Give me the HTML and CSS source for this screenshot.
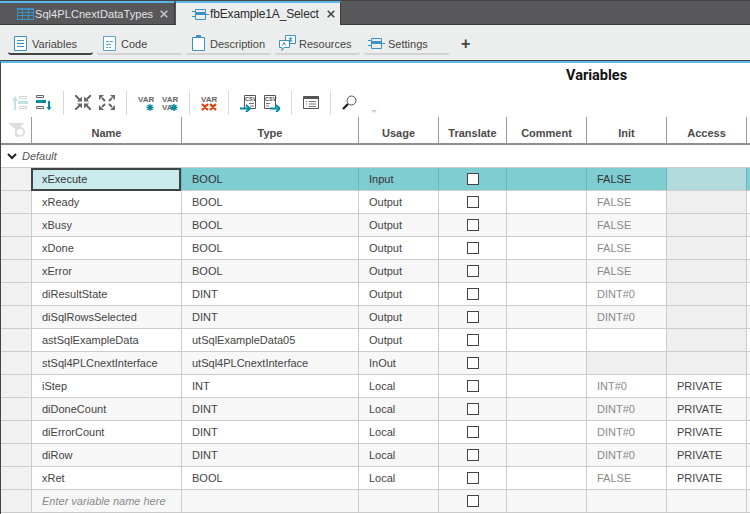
FILE: index.html
```html
<!DOCTYPE html>
<html lang="en">
<head>
    <meta charset="UTF-8">
    <title>fbExample1A_Select</title>
    <link rel="stylesheet" href="styles.css">
</head>
<body>
    <div class="window">
        <div class="tabbar">
            <div class="tab">
                <svg class="tab-icon" width="17" height="12" viewBox="0 0 17 12"><path d="M0 0h17v12H0z" fill="#3f90c4"/><path d="M1 2h4v2H1zM6 2h5v2H6zM12 2h4v2h-4zM1 5h4v2H1zM6 5h5v2H6zM12 5h4v2h-4zM1 8h4v3H1zM6 8h5v3H6zM12 8h4v3h-4z" fill="#58585a"/></svg>
                <span class="tab-name tab-name-small">Sql4PLCnextDataTypes</span>
                <svg class="tab-close" width="8" height="8" viewBox="0 0 8 8"><path d="M.7.700l6.600 6.600M7.300.700L.7 7.300" stroke="#c4c4c4" stroke-width="1.600"/></svg>
            </div>
            <div class="tab tab-active">
                <svg class="tab-icon" width="17" height="11" viewBox="0 0 17 11"><path d="M3.500.5h10v10h-10z" fill="none" stroke="#3f90c4"/><path d="M3 3h11v3H3z" fill="#3f90c4"/><path d="M0 2.500h3M0 7.500h3M14 5.500h3" stroke="#3f90c4"/></svg>
                <span class="tab-name">fbExample1A_Select</span>
                <svg class="tab-close" width="8" height="8" viewBox="0 0 8 8"><path d="M.7.700l6.600 6.600M7.300.700L.7 7.300" stroke="#444" stroke-width="1.600"/></svg>
            </div>
        </div>

        <div class="subtabs">
            <div class="subtab subtab-active">
                <svg width="13" height="15" viewBox="0 0 13 15"><path d="M.5.500h12v14H.5z" fill="#fff" stroke="#3f90c4"/><path d="M3 4.500h7M3 7.500h7M3 10.500h7" stroke="#3f90c4"/></svg>
                <span>Variables</span>
            </div>
            <div class="subtab">
                <svg width="13" height="15" viewBox="0 0 13 15"><path d="M.5.500h12v14H.5z" fill="#fff" stroke="#5aa4d0"/><path d="M3 5.500h3M7 5.500h3M3 8.500h5M3 11.500h2M6 11.500h2" stroke="#5aa4d0"/></svg>
                <span>Code</span>
            </div>
            <div class="subtab">
                <svg width="13" height="16" viewBox="0 0 13 16"><path d="M.5 2.500h12v13H.5z" fill="#fff" stroke="#3f90c4"/><path d="M4 0h5v3H4z" fill="#3f90c4"/></svg>
                <span>Description</span>
            </div>
            <div class="subtab">
                <svg width="17" height="16" viewBox="0 0 17 16"><path d="M6.500.500h10v8h-10z" fill="#fff" stroke="#3f90c4"/><path d="M.5 5.500h10v7H5l-2 3v-3H.5z" fill="#fff" stroke="#3f90c4"/><path d="M11.500 2v5M9.500 3l4 3M13.500 3l-4 3M3.500 10.500l1.500-3 1.500 3" fill="none" stroke="#3f90c4"/></svg>
                <span>Resources</span>
            </div>
            <div class="subtab subtab-last">
                <svg width="17" height="11" viewBox="0 0 17 11"><path d="M3.500.5h10v10h-10z" fill="none" stroke="#3f90c4"/><path d="M3 3h11v3H3z" fill="#3f90c4"/><path d="M0 2.500h3M0 7.500h3M14 5.500h3" stroke="#3f90c4"/></svg>
                <span>Settings</span>
            </div>
            <span class="add-tab">+</span>
        </div>

        <div class="content">
            <h2 class="title">Variables</h2>
            <div class="toolbar">
                <svg class="tool" width="16" height="15" viewBox="0 0 16 15"><path d="M3 15V4" stroke="#bfe3e6" stroke-width="2"/><path d="M0 6l3-5 3 5z" fill="#bfe3e6"/><path d="M7.500 1.500h7v2h-7zM7.500 11.500h7v2h-7z" fill="#fff" stroke="#d5d5d5"/><path d="M6 6h10v3H6z" fill="#bfe3e6"/></svg>
                <svg class="tool" width="16" height="16" viewBox="0 0 16 16"><path d="M.5.500h7v2h-7zM.5 11.500h7v2h-7z" fill="none" stroke="#666"/><path d="M0 5h10v3H0z" fill="#008c9e"/><path d="M13 6v7" stroke="#008c9e" stroke-width="2"/><path d="M10.500 12h5L13 15.500z" fill="#008c9e"/></svg>
                <i class="sep"></i>
                <svg class="tool" width="16" height="15" viewBox="0 0 16 15"><path d="M0 0l5 5M16 0l-5 5M0 15l5-5M16 15l-5-5" stroke="#666" stroke-width="2"/><path d="M7 6.500H2l5-5zM9 6.500h5l-5-5zM7 8.500H2l5 5zM9 8.500h5l-5 5z" fill="#666"/></svg>
                <svg class="tool" width="16" height="15" viewBox="0 0 16 15"><path d="M3 3l3 3M13 3l-3 3M3 12l3-3M13 12l-3-3" stroke="#666" stroke-width="2"/><path d="M0 0h5L0 5zM16 0h-5l5 5zM0 15h5l-5-5zM16 15h-5l5-5z" fill="#666"/></svg>
                <i class="sep"></i>
                <svg class="tool" width="16" height="18" viewBox="0 0 16 18"><text x="0" y="8" class="var-text">VAR</text><path d="M12 10v7M8.500 13.500h7M9.500 11l5 5M14.500 11l-5 5" stroke="#008c9e" stroke-width="1.300"/></svg>
                <svg class="tool" width="16" height="18" viewBox="0 0 16 18"><text x="0" y="8" class="var-text">VAR</text><text x="0" y="16" class="var-text">VA</text><path d="M12 10v7M8.500 13.500h7M9.500 11l5 5M14.500 11l-5 5" stroke="#008c9e" stroke-width="1.500"/></svg>
                <i class="sep"></i>
                <svg class="tool" width="16" height="18" viewBox="0 0 16 18"><text x="0" y="8" class="var-text">VAR</text><path d="M1 10l6 6M7 10l-6 6M9 10l6 6M15 10l-6 6" stroke="#e8400c" stroke-width="2.200"/></svg>
                <i class="sep"></i>
                <svg class="tool" width="16" height="18" viewBox="0 0 16 18"><path d="M4.500 1.500h11v13h-11z" fill="#fff" stroke="#555"/><text x="5" y="7" class="csv-text">CSV</text><path d="M9 9.500h5M10 12h4" stroke="#777"/><path d="M0 14.500h9" stroke="#008c9e" stroke-width="2"/><path d="M6 11l4 3.500-4 3.500" fill="none" stroke="#008c9e" stroke-width="2"/></svg>
                <svg class="tool" width="16" height="18" viewBox="0 0 16 18"><path d="M.5 1.500h11v13H.5z" fill="#fff" stroke="#555"/><text x="1" y="7" class="csv-text">CSV</text><path d="M2 9.500h4M2 12h3" stroke="#777"/><path d="M6 14.500h9" stroke="#008c9e" stroke-width="2"/><path d="M12 11l4 3.500-4 3.500" fill="none" stroke="#008c9e" stroke-width="2"/></svg>
                <i class="sep"></i>
                <svg class="tool" width="16" height="13" viewBox="0 0 16 13"><path d="M.5.500h15v12H.5z" fill="#fff" stroke="#555"/><path d="M1 2h14" stroke="#555" stroke-width="2"/><path d="M3 5.500h1M3 8h1M6 5.500h7M6 8h7M6 10.500h7" stroke="#777"/></svg>
                <i class="sep"></i>
                <svg class="tool" width="15" height="15" viewBox="0 0 15 15"><circle cx="9.500" cy="5.500" r="4.500" fill="#fff" stroke="#555"/><path d="M6 9l-5 5" stroke="#222" stroke-width="2.400"/></svg>
                <span class="tool-more"></span>
            </div>

            <table class="grid">
                <colgroup>
                    <col class="c-handle"><col class="c-name"><col class="c-type"><col class="c-usage"><col class="c-translate"><col class="c-comment"><col class="c-init"><col class="c-access"><col class="c-rest">
                </colgroup>
                <thead>
                    <tr>
                        <th class="filter"><svg width="18" height="15" viewBox="0 0 18 15"><path d="M0 0h16l-6 6v9l-3-2V6z" fill="#dedede"/><circle cx="12" cy="9" r="4" fill="#fff" stroke="#dedede" stroke-width="2"/></svg></th>
                        <th>Name</th><th>Type</th><th>Usage</th><th>Translate</th><th>Comment</th><th>Init</th><th>Access</th><th></th>
                    </tr>
                </thead>
                <tbody>
                    <tr class="group"><td colspan="9"><svg width="10" height="7" viewBox="0 0 10 7"><path d="M1 1l4 4 4-4" fill="none" stroke="#222" stroke-width="2"/></svg><em>Default</em></td></tr>
                    <tr class="selected"><td class="handle"></td><td class="focus">xExecute</td><td>BOOL</td><td>Input</td><td class="check"><i></i></td><td></td><td>FALSE</td><td class="locked"></td><td></td></tr>
                    <tr><td class="handle"></td><td>xReady</td><td>BOOL</td><td>Output</td><td class="check"><i></i></td><td></td><td class="dim">FALSE</td><td class="locked"></td><td></td></tr>
                    <tr><td class="handle"></td><td>xBusy</td><td>BOOL</td><td>Output</td><td class="check"><i></i></td><td></td><td class="dim">FALSE</td><td class="locked"></td><td></td></tr>
                    <tr><td class="handle"></td><td>xDone</td><td>BOOL</td><td>Output</td><td class="check"><i></i></td><td></td><td class="dim">FALSE</td><td class="locked"></td><td></td></tr>
                    <tr><td class="handle"></td><td>xError</td><td>BOOL</td><td>Output</td><td class="check"><i></i></td><td></td><td class="dim">FALSE</td><td class="locked"></td><td></td></tr>
                    <tr><td class="handle"></td><td>diResultState</td><td>DINT</td><td>Output</td><td class="check"><i></i></td><td></td><td class="dim">DINT#0</td><td class="locked"></td><td></td></tr>
                    <tr><td class="handle"></td><td>diSqlRowsSelected</td><td>DINT</td><td>Output</td><td class="check"><i></i></td><td></td><td class="dim">DINT#0</td><td class="locked"></td><td></td></tr>
                    <tr><td class="handle"></td><td>astSqlExampleData</td><td>utSqlExampleData05</td><td>Output</td><td class="check"><i></i></td><td></td><td class="dim"></td><td class="locked"></td><td></td></tr>
                    <tr><td class="handle"></td><td>stSql4PLCnextInterface</td><td>utSql4PLCnextInterface</td><td>InOut</td><td class="check"><i></i></td><td></td><td class="locked"></td><td class="locked"></td><td></td></tr>
                    <tr><td class="handle"></td><td>iStep</td><td>INT</td><td>Local</td><td class="check"><i></i></td><td></td><td class="dim">INT#0</td><td>PRIVATE</td><td></td></tr>
                    <tr><td class="handle"></td><td>diDoneCount</td><td>DINT</td><td>Local</td><td class="check"><i></i></td><td></td><td class="dim">DINT#0</td><td>PRIVATE</td><td></td></tr>
                    <tr><td class="handle"></td><td>diErrorCount</td><td>DINT</td><td>Local</td><td class="check"><i></i></td><td></td><td class="dim">DINT#0</td><td>PRIVATE</td><td></td></tr>
                    <tr><td class="handle"></td><td>diRow</td><td>DINT</td><td>Local</td><td class="check"><i></i></td><td></td><td class="dim">DINT#0</td><td>PRIVATE</td><td></td></tr>
                    <tr><td class="handle"></td><td>xRet</td><td>BOOL</td><td>Local</td><td class="check"><i></i></td><td></td><td class="dim">FALSE</td><td>PRIVATE</td><td></td></tr>
                    <tr><td class="handle"></td><td class="placeholder">Enter variable name here</td><td></td><td></td><td class="check"><i></i></td><td></td><td></td><td></td><td></td></tr>
                </tbody>
            </table>
        </div>
    </div>
</body>
</html>
```

FILE: styles.css
```css
/* Base */
* {
    box-sizing: border-box;
    margin: 0;
    padding: 0;
}

html, body {
    width: 750px;
    height: 514px;
    overflow: hidden;
}

body {
    font-family: 'Liberation Sans', Arial, sans-serif;
    font-size: 11px;
    color: #333;
    background: #fff;
}

.window {
    display: flex;
    flex-direction: column;
    height: 514px;
}

/* Document tabs */
.tabbar {
    display: flex;
    align-items: flex-start;
    height: 25px;
    background: #58585a;
    border-top: 1px solid #444;
    border-bottom: 1px solid #3a3a3a;
    flex-shrink: 0;
}

.tab {
    display: flex;
    align-items: center;
    width: 175px;
    height: 23px;
    padding-left: 17px;
    border-top: 2px solid #5bb8e8;
    border-right: 1px solid #3a3a3a;
    color: #e4e4e4;
    font-size: 12px;
}

.tab-active {
    width: 165px;
    margin-left: 1px;
    height: 24px;
    padding-left: 16px;
    background: #eceeed;
    color: #2b2b2b;
}

.tab-icon {
    margin-right: 1px;
    flex-shrink: 0;
}

.tab-name {
    width: 109px;
    white-space: nowrap;
    letter-spacing: -0.15px;
}

.tab-name-small {
    width: 117px;
    font-size: 11px;
    letter-spacing: 0.07px;
}

.tab-close {
    flex-shrink: 0;
    margin-left: 8px;
}

/* View tabs */
.subtabs {
    display: flex;
    align-items: flex-start;
    height: 36px;
    padding: 10px 0 0 8px;
    background: #eceeed;
    border-bottom: 1px solid #444;
    flex-shrink: 0;
}

.subtab {
    display: grid;
    grid-template-columns: 24px 1fr;
    align-items: center;
    justify-items: center;
    width: 85px;
    height: 20px;
    margin-right: 4px;
    border-bottom: 2px solid #d2d2d2;
    border-radius: 0 0 3px 3px;
    color: #444;
    font-size: 11px;
}

.subtab span {
    justify-self: start;
}

.subtab svg {
    margin-bottom: 2px;
}

.subtab-active {
    border-bottom-color: #444;
}

.subtab-last {
    width: 86px;
}

.add-tab {
    margin-left: 7px;
    font-size: 16px;
    font-weight: bold;
    line-height: 18px;
    color: #444;
}

/* Main area */
.content {
    flex: 1;
    border-top: 2px solid #5bb8e8;
    border-left: 1px solid #444;
    overflow: hidden;
}

.title {
    height: 25px;
    padding-top: 4px;
    padding-left: 565px;
    font-family: Roboto, sans-serif;
    font-size: 14.5px;
    line-height: 17px;
    font-weight: bold;
    color: #111;
}

.toolbar {
    display: flex;
    align-items: center;
    height: 29px;
    padding-left: 11px;
}

.tool {
    margin-right: 8px;
    flex-shrink: 0;
}

.var-text {
    font: bold 8px 'Liberation Sans', sans-serif;
    fill: #666;
}

.csv-text {
    font: bold 5.500px 'Liberation Sans', sans-serif;
    fill: #444;
}

.sep {
    width: 1px;
    height: 24px;
    margin: 0 11px 0 3px;
    background: #d8d8d8;
}

.tool-more {
    margin: 17px 0 0 6px;
    border-left: 3px solid transparent;
    border-right: 3px solid transparent;
    border-top: 3px solid #ccc;
}

/* Variables grid */
.grid {
    width: 780px;
    table-layout: fixed;
    border-collapse: separate;
    border-spacing: 0;
}

.c-handle { width: 30px; }
.c-name { width: 150px; }
.c-type { width: 177px; }
.c-usage { width: 80px; }
.c-translate { width: 68px; }
.c-comment { width: 80px; }
.c-init { width: 80px; }
.c-access { width: 80px; }
.c-rest { width: 35px; }

.grid th {
    height: 28px;
    padding-top: 5px;
    font-size: 11px;
    color: #4a4a4a;
    background: #fff;
    border-left: 1px solid #999;
    border-bottom: 2px solid #8f8f8f;
}

.grid th.filter {
    border-left: none;
    text-align: left;
    padding: 0;
}

.filter svg {
    display: block;
    margin-left: 7px;
}

.grid td {
    height: 23px;
    padding: 0 10px;
    white-space: nowrap;
    overflow: hidden;
    color: #444;
    border-left: 1px solid #ccc;
    border-bottom: 1px solid #ccc;
}

.grid tbody tr:nth-child(odd) td {
    background: #fff;
}

.grid tbody tr:nth-child(even) td {
    background: #f7f7f7;
}

.grid tbody tr td.handle {
    background: #f1f1f1;
    border-left: none;
}

.grid tbody tr.group td {
    height: 23px;
    padding-left: 6px;
    background: #fff;
    border-left: none;
}

.group svg {
    margin-right: 5px;
}

.group em {
    color: #555;
}

.grid tbody tr.selected td {
    background: #7fccd1;
    color: #333;
    border-left-color: #6cb8bd;
}

.grid tbody tr.selected td.handle {
    background: #f1f1f1;
}

.grid tbody tr.selected td.focus {
    background: #cbeaec;
    border: 2px solid #3f4345;
    padding: 0 0 2px 9px;
}

.grid tbody tr td.locked {
    background: #efefef;
}

.grid tbody tr.selected td.locked {
    background: #b2dadc;
}

.grid td.dim {
    color: #8a8a8a;
}

.grid td.placeholder {
    color: #8a8a8a;
    font-style: italic;
}

.grid td.check {
    padding: 0;
}

.check i {
    display: block;
    width: 12px;
    height: 12px;
    margin: 0 auto;
    background: #fff;
    border: 1px solid #444;
}
```
